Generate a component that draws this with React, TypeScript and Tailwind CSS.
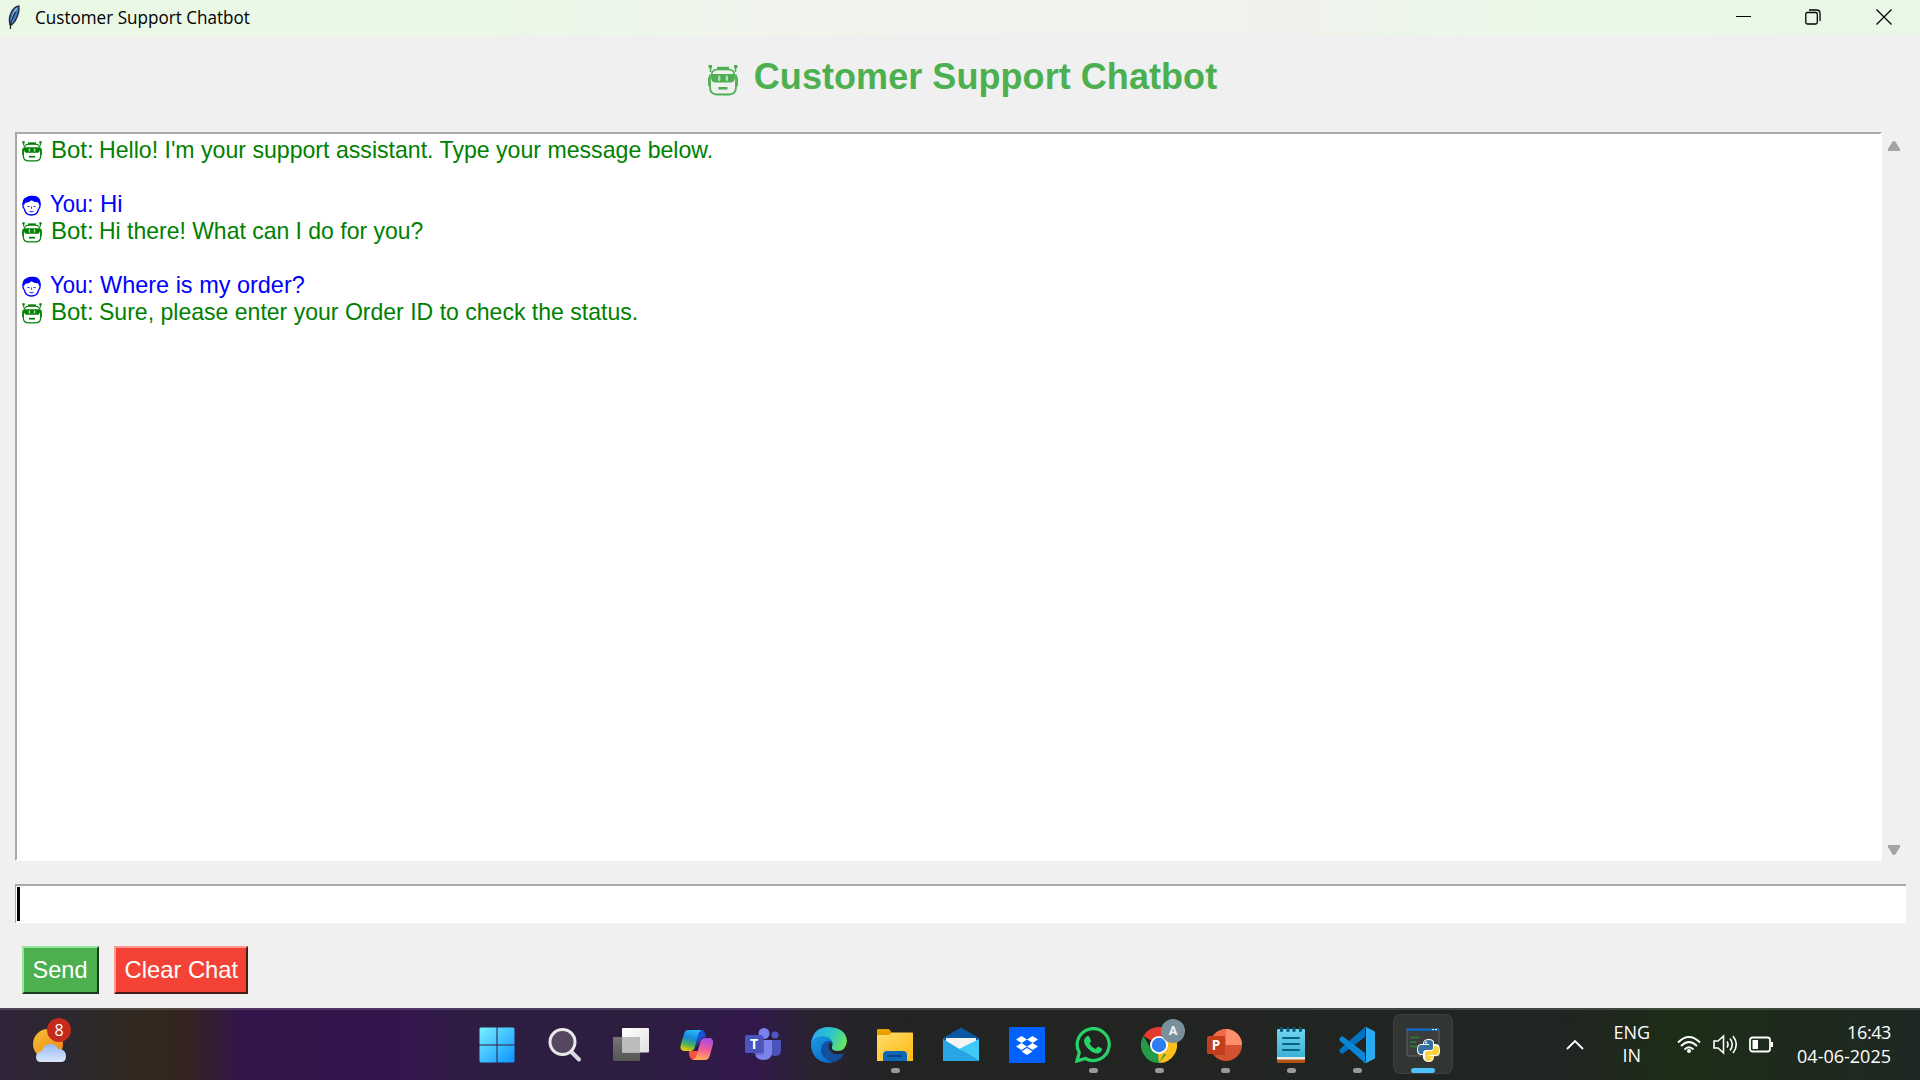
import type { ReactNode } from "react";

function Robot({ className, visor }: { className: string; visor: string }) {
  return (
    <svg viewBox="0 0 30 31" className={className} fill="none" stroke="currentColor" strokeWidth="1.800">
      <path d="M.5 1.500h3.500M29.500 1.500H26" strokeWidth="3" />
      <path d="M2.500 2v5M27.500 2v5" strokeWidth="1.600" />
      <path d="M9 3.200h12" strokeWidth="2.800" />
      <path d="M3.500 9Q4.500 4.500 10 4.500h10q5.500 0 6.500 4.500" strokeWidth="1.600" />
      <path d="M2 9.500V22q0 7.500 7 7.500h12q7 0 7-7.500V9.500" />
      <path d="M.8 12v9M29.200 12v9" strokeWidth="1.400" />
      <path d="M3 9h24v3q0 5.500-5 5.500H8Q3 17.500 3 12z" fill="currentColor" stroke="none" />
      <path d="M11.200 11.700v3M18.800 11.700v3" stroke={visor} strokeWidth="2.400" strokeLinecap="round" opacity=".65" />
      <path d="M10.500 23.300h9" strokeWidth="2.600" />
    </svg>
  );
}

function Person() {
  return (
    <svg viewBox="0 0 20 22" className="h-[21px] w-[19px]" fill="none" stroke="currentColor" strokeWidth="1.400">
      <path d="M2.500 14.500Q3.500 21 10 21t7.500-6.500" />
      <path d="M1 8q-.5 5 1.500 6.500M19 8q.5 5-1.500 6.500" />
      <path d="M1 9.500Q0 4 4 2.500 7 0 11 .8q6-.3 8 4.200.8 2 .3 4.500l-1.300 1-1-3Q13 8 10 5.500 7 8.500 3.500 8L2 10.800z" fill="currentColor" stroke="none" />
      <path d="M5.500 12h2.500M12 12h2.500M10 12v2.500M8 17q2 1 4 0" strokeWidth="1.200" opacity=".75" />
    </svg>
  );
}

function Feather() {
  return (
    <svg viewBox="0 0 14 26" className="h-[25px] w-3.5 shrink-0">
      <path d="M12 1Q7 2 4 8 1 14 3 21q4-1 7-8 3-7 2-12z" fill="#3c78bd" stroke="#222b38" strokeWidth="1.400" />
      <path d="M10 3Q5 9 4.500 19" stroke="#8fbdec" strokeWidth="1.600" fill="none" />
      <path d="M8.500 7Q3.500 16 3.200 25" stroke="#1b1b1b" strokeWidth="1.200" fill="none" />
    </svg>
  );
}

type Line = { who: "bot" | "you" | "gap"; text?: string; fit?: string };
const lines: Line[] = [
  { who: "bot", text: "Hello! I'm your support assistant. Type your message below.", fit: "scale-x-[0.963]" },
  { who: "gap" },
  { who: "you", text: "Hi" },
  { who: "bot", text: "Hi there! What can I do for you?", fit: "scale-x-[0.957]" },
  { who: "gap" },
  { who: "you", text: "Where is my order?", fit: "scale-x-[0.978]" },
  { who: "bot", text: "Sure, please enter your Order ID to check the status.", fit: "scale-x-[0.960]" },
];

function Row({ line }: { line: Line }) {
  if (line.who === "gap") return <div className="h-[27px]" />;
  const bot = line.who === "bot";
  return (
    <div className={`flex h-[27px] items-center whitespace-pre ${bot ? "text-[#008000]" : "text-[#0000ff]"}`}>
      <span className="mr-2 flex w-[21px] justify-center pt-[3px]">
        {bot ? <Robot className="h-[21px] w-[20px]" visor="#ffffff" /> : <Person />}
      </span>
      {bot ? (
        <span className="ml-px w-12">Bot: </span>
      ) : (
        <span className="w-[50px] origin-left scale-x-[0.92]">You: </span>
      )}
      <span className={`origin-left ${line.fit ?? ""}`}>{line.text}</span>
    </div>
  );
}

const icon = "size-9";

const Start = (
  <svg viewBox="0 0 36 36" className={icon}>
    <defs><linearGradient id="st" x1="0" y1="0" x2="1" y2="1"><stop stopColor="#78efff" /><stop offset="1" stopColor="#0a94ff" /></linearGradient></defs>
    <path fill="url(#st)" d="M2 .5h15.500V17.500H.5V2Q.5.500 2 .5zM18.500.5H34q1.500 0 1.500 1.500v15.500h-17zM.5 18.500h17v17H2Q.5 35.500.5 34zM18.500 18.500h17V34q0 1.500-1.500 1.500H18.500z" />
  </svg>
);
const Search = (
  <svg viewBox="0 0 36 36" className={icon} fill="none">
    <path d="M24.500 25L32 32.500" stroke="#d5d9df" strokeWidth="4" strokeLinecap="round" />
    <circle cx="15.500" cy="15" r="12.500" fill="#54475f" stroke="#e6e8eb" strokeWidth="3" />
  </svg>
);
const TaskView = (
  <svg viewBox="0 0 36 36" className={icon}>
    <defs>
      <linearGradient id="tv" x2="1" y2="1"><stop stopColor="#fff" /><stop offset="1" stopColor="#e0e0e0" /></linearGradient>
      <linearGradient id="tg" x2="0" y2="1"><stop stopColor="#757575" /><stop offset="1" stopColor="#555" /></linearGradient>
    </defs>
    <rect y="10" width="27" height="24" rx="1" fill="url(#tg)" />
    <rect x="9" y="1" width="27" height="24.500" rx="1" fill="url(#tv)" />
    <path d="M9 10h18v15.500H9z" fill="#bcbcbc" />
  </svg>
);
const Copilot = (
  <svg viewBox="0 0 36 36" className={icon}>
    <defs>
      <linearGradient id="ca" x1=".6" y1="0" x2=".3" y2="1"><stop stopColor="#28b8f5" /><stop offset=".4" stopColor="#1489d8" /><stop offset=".7" stopColor="#4cb35c" /><stop offset="1" stopColor="#f5cc00" /></linearGradient>
      <linearGradient id="cb" x1=".6" y1="0" x2=".4" y2="1"><stop stopColor="#a24fe8" /><stop offset=".5" stopColor="#f0599a" /><stop offset="1" stopColor="#ffae55" /></linearGradient>
    </defs>
    <path d="M20 3h3q2 0 3 3l1 4q-5 0-6 4l-4 6z" fill="#1851d6" />
    <path d="M10 24h9q-1 9-4 9-4 0-5-6z" fill="#f5553d" />
    <path d="M9 3h14q-3 1-4 6l-3 11q-1 4-5 4H5q-5-1-3-7L5 7q1-4 4-4z" fill="url(#ca)" />
    <path d="M26 11h5q4 1 3 6l-3 11q-1 5-5 5H14q3-2 4-6l3-11q1-5 5-5z" fill="url(#cb)" />
  </svg>
);
const Teams = (
  <svg viewBox="0 0 36 36" className={icon}>
    <circle cx="30" cy="8" r="3.600" fill="#4f57c7" /><path d="M25 13h11v10q0 6-6 6-3 0-5-2z" fill="#4b53bc" />
    <circle cx="19" cy="6.500" r="5.500" fill="#7b83eb" /><path d="M10 13h17v12q0 8-8.500 8T10 25z" fill="#7b83eb" />
    <rect y="8" width="18" height="18" rx="1.500" fill="#4b53bc" />
    <path d="M18.500 10v17H7" stroke="#4048a0" fill="none" opacity=".6" />
    <text x="9" y="22" textAnchor="middle" fontSize="14" fontWeight="700" fill="#fff" fontFamily="Open Sans">T</text>
  </svg>
);
const Edge = (
  <svg viewBox="0 0 36 36" className={icon}>
    <defs>
      <linearGradient id="ea" x1="0" y1=".3" x2="1" y2=".6"><stop stopColor="#2aa8f0" /><stop offset=".5" stopColor="#2cc6cc" /><stop offset="1" stopColor="#6be85a" /></linearGradient>
      <linearGradient id="eb" x1="0" y1="0" x2=".7" y2="1"><stop stopColor="#1b9de2" /><stop offset="1" stopColor="#0a6ccc" /></linearGradient>
    </defs>
    <path d="M0 18Q1 0 18 0q17 1 18 14-1 10-10 10-6-.5-5-4 2-7-6-10Q5 8 0 18z" fill="url(#ea)" />
    <path d="M0 19Q1 9 12 9q9 1 10 9 0-4-5-4-7 2-6 10 2 9 11 11-2 1-4 1Q2 35 0 19z" fill="url(#eb)" />
    <path d="M17 14q-8 3-7 11 3 9 13 10 7-2 10-8-1-1-3 0-9 2-12-5-1-3 0-5 1-2 4 0 0-3-5-3z" fill="#12509f" />
  </svg>
);
const Folder = (
  <svg viewBox="0 0 36 36" className={icon}>
    <defs><linearGradient id="fo" x2="1" y2="1"><stop stopColor="#ffdc6e" /><stop offset="1" stopColor="#ffb90f" /></linearGradient></defs>
    <path d="M0 3q0-1 1-1h11l3 4h20v5H0z" fill="#e6a100" />
    <path d="M0 8h12l3-2.500h20q1 0 1 1V34H0z" fill="url(#fo)" />
    <path d="M6 34v-6q0-4 4-4h16q4 0 4 4v6z" fill="#0e67b6" /><path d="M10 29h15" stroke="#06457f" strokeWidth="2" />
  </svg>
);
const Mail = (
  <svg viewBox="0 0 36 36" className={icon}>
    <path d="M0 11L18 .5 36 11v3H0z" fill="#0a57a4" />
    <path d="M3 11h30v4L18 24 3 15z" fill="#f4f4f4" />
    <path d="M36 12v22L16 22z" fill="#3ecbf5" />
    <path d="M0 12l36 22H0z" fill="#27a5e5" />
  </svg>
);
const Dropbox = (
  <svg viewBox="0 0 36 36" className={icon}>
    <path d="M0 0h36v36H0z" fill="#0061fe" />
    <path d="M12.500 9l5.500 3.500-5.500 3.500L7 12.500zM23.500 9l5.500 3.500-5.500 3.500-5.500-3.500zM12.500 16l5.500 3.500-5.500 3.500L7 19.500zM23.500 16l5.500 3.500-5.500 3.500-5.500-3.500zM18 21l5.500 3.500L18 28l-5.500-3.500z" fill="#fff" />
  </svg>
);
const WhatsApp = (
  <svg viewBox="0 0 36 36" className={icon}>
    <path d="M2 34l2.300-8.500a16 16 0 1 1 6 6z" fill="none" stroke="#25d366" strokeWidth="3.200" />
    <path d="M11 10q2-2 3.500 0l1.500 4q0 1-1.500 2.500 2 4 6 5.500l2-2q.8-.7 4.500 1.500 0 4-4 5-5 0-9.500-4.500T9 14q0-2.500 2-4z" fill="#25d366" />
  </svg>
);
const Chrome = (
  <svg viewBox="0 0 36 36" className={icon}>
    <path d="M18 18L2.400 9A18 18 0 0 1 33.600 9z" fill="#e33b2e" />
    <path d="M18 18L33.600 9A18 18 0 0 1 18 36l-3-8z" fill="#fcc018" />
    <path d="M2.400 9L10 22l8 5h7.500L18 36A18 18 0 0 1 2.400 9z" fill="#259b49" />
    <path d="M18 9h15.600v1H18z" fill="#e33b2e" /><path d="M17 27l8.500-4.500L18 36z" fill="#fcc018" />
    <circle cx="18" cy="18" r="9" fill="#fff" /><circle cx="18" cy="18" r="7.200" fill="#2f7bf2" />
  </svg>
);
const PowerPoint = (
  <svg viewBox="0 0 36 36" className={icon}>
    <circle cx="19" cy="18" r="16" fill="#d35230" /><path d="M19 2a16 16 0 0 1 16 16H19z" fill="#ff8f6b" /><path d="M19 2v16H3A16 16 0 0 1 19 2z" fill="#ed6c47" />
    <path d="M18 11v17H5l-1-2V9h13z" fill="#8d2a16" opacity=".5" />
    <rect y="9" width="18" height="18" rx="1.500" fill="#c43e1c" />
    <text x="9" y="22.700" textAnchor="middle" fontSize="13.500" fontWeight="700" fill="#fff" fontFamily="Open Sans">P</text>
  </svg>
);
const Notepad = (
  <svg viewBox="0 0 36 36" className={icon}>
    <defs><linearGradient id="np" x2="0" y2="1"><stop stopColor="#71d6ee" /><stop offset="1" stopColor="#3bb1d5" /></linearGradient></defs>
    <path d="M4 31h28v4q0 1-1 1H5q-1 0-1-1z" fill="#b4520f" /><path d="M4 28h28v4.500H4z" fill="#ececec" />
    <path d="M5 2h26q1 0 1 1v27H4V3q0-1 1-1z" fill="url(#np)" />
    <path d="M8.500 1.500v2M15 1.500v2M21 1.500v2M27.500 1.500v2" stroke="#0b5978" strokeWidth="3.200" strokeLinecap="round" />
    <path d="M10 11h16M10 17h16M10 23h16" stroke="#075f82" strokeWidth="2" strokeLinecap="round" />
  </svg>
);
const VSCode = (
  <svg viewBox="0 0 36 36" className={icon}>
    <path d="M1 25Q-.5 23.500 1 22L26 0v10L4 26.500q-1 .5-2 0z" fill="#0073c0" />
    <path d="M1 11Q-.5 12.500 1 14L26 36V26L4 9.500q-1-.5-2 0z" fill="#0b86d4" />
    <path d="M26 0q.5-.3 1 0l8 4q1 .5 1 1.500v25q0 1-1 1.500l-8 4q-1 0-1.500-.5 1.500 0 1.500-2v-32Q27 1 26 0z" fill="#29aaf3" />
  </svg>
);
const Python = (
  <svg viewBox="0 0 36 36" className={icon}>
    <path d="M2 2h32v27H2z" fill="#3b3d3f" stroke="#626466" /><path d="M1.500 1.500h32V4h-32z" fill="#0b66bd" /><path d="M27 2.500h2M30 2.500h2" stroke="#fff" />
    <path d="M5 10.500h9M5 15h6M5 19.500h9" stroke="#2d8233" strokeWidth="1.400" />
    <path d="M24 12q5 0 5 4v1h2q4 0 4 7 0 5-4 5h-2q0 6-5 6t-6-4v-3h-2q-4 0-4-5 0-6 4-6h2q0-5 6-5z" fill="#fff" />
    <path d="M24 13q4 0 4 3v5q0 2-3 2h-4q-3 0-3 4h-2q-3 0-3-5 0-4 3-4h8v-1h-5v-1q0-3 5-3z" fill="#356f9f" />
    <path d="M24 34q-4 0-4-3v-5q0-2 3-2h3q3 0 3-5h2q3 0 3 5 0 4-3 4h-7v1h4v2q0 3-4 3z" fill="#ffd43b" />
    <circle cx="21" cy="15.500" r="1" fill="#fff" /><circle cx="26.500" cy="31.500" r="1" fill="#fff" />
  </svg>
);

const apps: { name: string; art: ReactNode; open?: boolean; active?: boolean; badge?: string }[] = [
  { name: "Start", art: Start },
  { name: "Search", art: Search },
  { name: "Task View", art: TaskView },
  { name: "Copilot", art: Copilot },
  { name: "Teams", art: Teams },
  { name: "Edge", art: Edge },
  { name: "Explorer", art: Folder, open: true },
  { name: "Mail", art: Mail },
  { name: "Dropbox", art: Dropbox },
  { name: "WhatsApp", art: WhatsApp, open: true },
  { name: "Chrome", art: Chrome, open: true, badge: "A" },
  { name: "PowerPoint", art: PowerPoint, open: true },
  { name: "Notepad", art: Notepad, open: true },
  { name: "VS Code", art: VSCode, open: true },
  { name: "Python", art: Python, active: true },
];

function Taskbar() {
  return (
    <footer className="flex h-[72px] border-t-2 border-white/15 bg-[linear-gradient(90deg,#30233a_0px,#2c292d_80px,#33281f_145px,#33241f_185px,#33164b_240px,#34164f_400px,#2e1e42_480px,#2d1e40_640px,#31184c_750px,#29222f_815px,#222422_900px,#212521_1580px,#1c2e17_1680px,#1e2a1c_1800px,#1f2824_1920px)] bg-origin-border text-white">
      <div className="flex w-[467px] pt-[9px] pl-8">
        <div className="relative mt-0.5 h-10 w-10">
          <svg viewBox="0 0 40 44" className="mt-1 h-11 w-10">
            <defs>
              <linearGradient id="sun" x2="1" y2="1"><stop stopColor="#f4c332" /><stop offset="1" stopColor="#f27d16" /></linearGradient>
              <linearGradient id="cl" x2="0" y2="1"><stop stopColor="#95b9f4" /><stop offset="1" stopColor="#dbe7fb" /></linearGradient>
            </defs>
            <circle cx="16" cy="19" r="15" fill="url(#sun)" />
            <path d="M9 37q-5 0-5-5 0-5 6-6 2-7 8-7 6 0 8 5 8 0 8 7 0 6-5 6z" fill="url(#cl)" />
          </svg>
          <span className="absolute -top-[3px] left-[15px] flex size-6 items-center justify-center rounded-full bg-[#c42b1c] font-['Open_Sans',sans-serif] text-[16px]">8</span>
        </div>
      </div>
      <nav className="flex gap-1.5">
        {apps.map((a, i) => (
          <div key={a.name} className={`relative mt-1 flex h-[60px] w-[60px] flex-col items-center rounded-lg border ${i === 0 ? "mr-0.5" : ""} ${a.active ? "border-white/5 bg-white/8" : "border-transparent"}`}>
            <div className="mt-3 h-9">{a.art}</div>
            {a.badge && <span className="absolute top-1 left-[31px] flex size-6 items-center justify-center rounded-full bg-[#78909c] font-['Roboto',sans-serif] text-[13px] font-bold text-white/90">{a.badge}</span>}
            {a.open && <i className="mt-[5px] h-[5px] w-[9px] rounded-full bg-[#9a9a9a]" />}
            {a.active && <i className="mt-[5px] h-[5px] w-6 rounded-full bg-[#4cc2ff]" />}
          </div>
        ))}
      </nav>
      <div className="ml-auto flex items-center pr-[29px] pb-0.5 font-['Open_Sans',sans-serif] text-[18px] leading-6">
        <svg viewBox="0 0 18 11" className="mr-[29px] h-[11px] w-[18px]" fill="none" stroke="#fff" strokeWidth="1.800"><path d="M1 10l8-8 8 8" /></svg>
        <div className="mr-[27px] text-center leading-[23px]"><div>ENG</div><div>IN</div></div>
        <svg viewBox="0 0 24 19" className="mr-3 h-[19px] w-6" fill="none" stroke="#fff" strokeWidth="1.800">
          <path d="M1 7.500Q12-3.500 23 7.500M4 11q8-8 16 0M7.500 14.500q4.500-4.500 9 0" /><circle cx="12" cy="16" r="2" fill="#fff" stroke="none" />
        </svg>
        <svg viewBox="0 0 25 21" className="mr-[11px] h-[21px] w-[25px]" fill="none" stroke="#fff" strokeWidth="1.600">
          <path d="M1 7h4l5.500-5v17L5 14H1zM14 7.500q2 3 0 6M17 4.500q4.500 6 0 12M20 2q6.500 8.500 0 17" />
        </svg>
        <svg viewBox="0 0 25 17" className="mr-[23px] h-[17px] w-[25px]" fill="none" stroke="#fff" strokeWidth="1.800">
          <rect x="1" y="1.500" width="20" height="14" rx="2.500" /><path d="M3.500 4h5.500v9H3.500z" fill="#fff" stroke="none" /><path d="M22 6h2v5h-2z" fill="#fff" stroke="none" />
        </svg>
        <div className="text-right"><div className="tracking-[-0.4px]">16:43</div><div>04-06-2025</div></div>
      </div>
    </footer>
  );
}

export default function App() {
  return (
    <div className="flex h-[1080px] w-[1920px] flex-col overflow-hidden bg-[#f0f0f0] font-['Liberation_Sans',Arial,sans-serif]">
      <header className="flex h-9 items-start bg-[linear-gradient(90deg,#eaf8e6_0px,#eaf8e6_500px,#eff5ec_700px,#f3f2ee_900px,#f1f1ee_1250px,#ebf8e8_1500px,#e9f8e6_1920px)]">
        <div className="flex h-[35px] items-center pl-[7px]">
          <Feather />
          <span className="ml-[14px] origin-left scale-x-[0.95] font-['Open_Sans',sans-serif] text-[18px] text-black">Customer Support Chatbot</span>
        </div>
        <div className="ml-auto flex h-[34px] items-center text-black">
          <svg viewBox="0 0 16 16" className="mr-[53px] size-4" stroke="currentColor"><path d="M0 7.500h15" /></svg>
          <svg viewBox="0 0 16 16" className="mr-[55px] size-4" fill="none" stroke="currentColor" strokeWidth="1.300"><rect x=".8" y="3.500" width="11.500" height="11.500" rx="1.500" /><path d="M4 1h7.500q3.500 0 3.500 3.500V12" /></svg>
          <svg viewBox="0 0 16 16" className="mr-7 size-4" stroke="currentColor" strokeWidth="1.300"><path d="M.5.500l15 15M15.500.500l-15 15" /></svg>
        </div>
      </header>
      <main className="flex h-[972px] flex-col px-[15px]">
        <h1 className="flex h-24 items-start justify-center pt-5 pl-[5px] text-[36px] leading-[42px] font-bold tracking-[0.06px] text-[#4caf50]">
          <Robot className="mt-[9px] mr-4 h-[31px] w-[30px]" visor="#f0f0f0" />
          <span>Customer Support Chatbot</span>
        </h1>
        <div className="flex h-[729px]">
          <section className="w-[1867px] border-2 border-t-[#a8a8a8] border-r-white border-b-white border-l-[#a8a8a8] bg-white pt-0.5 pl-1 text-[24px]">
            {lines.map((l, i) => <Row key={i} line={l} />)}
          </section>
          <aside className="flex w-[23px] flex-col items-center justify-between pt-[9px] pb-[5px]">
            <svg viewBox="0 0 12 10" className="h-2.5 w-3" fill="#a3a3a3"><path d="M6 0q1 0 1.800 1.200L12 8v2H0V8l4.200-6.800Q5 0 6 0z" /></svg>
            <svg viewBox="0 0 12 10" className="mb-px h-2.5 w-3 rotate-180" fill="#a3a3a3"><path d="M6 0q1 0 1.800 1.200L12 8v2H0V8l4.200-6.800Q5 0 6 0z" /></svg>
          </aside>
        </div>
        <div className="mt-[23px] -mr-px h-[39px] border-t-2 border-l border-[#a8a8a8] bg-white pt-px pl-px"><div className="h-[34px] w-[3px] bg-black" /></div>
        <div className="mt-[23px] ml-[7px] flex gap-[15px] text-[24px] text-white">
          <button className="h-12 w-[77px] border-2 border-t-[#96e69a] border-r-[#1c3a1e] border-b-[#1c3a1e] border-l-[#96e69a] bg-[#4caf50]"><span className="inline-block scale-x-[0.98]">Send</span></button>
          <button className="h-12 w-[134px] border-2 border-t-[#ff9a92] border-r-[#4a1a17] border-b-[#4a1a17] border-l-[#ff9a92] bg-[#f44336] pl-px"><span className="inline-block scale-x-[0.99]">Clear Chat</span></button>
        </div>
      </main>
      <Taskbar />
    </div>
  );
}
